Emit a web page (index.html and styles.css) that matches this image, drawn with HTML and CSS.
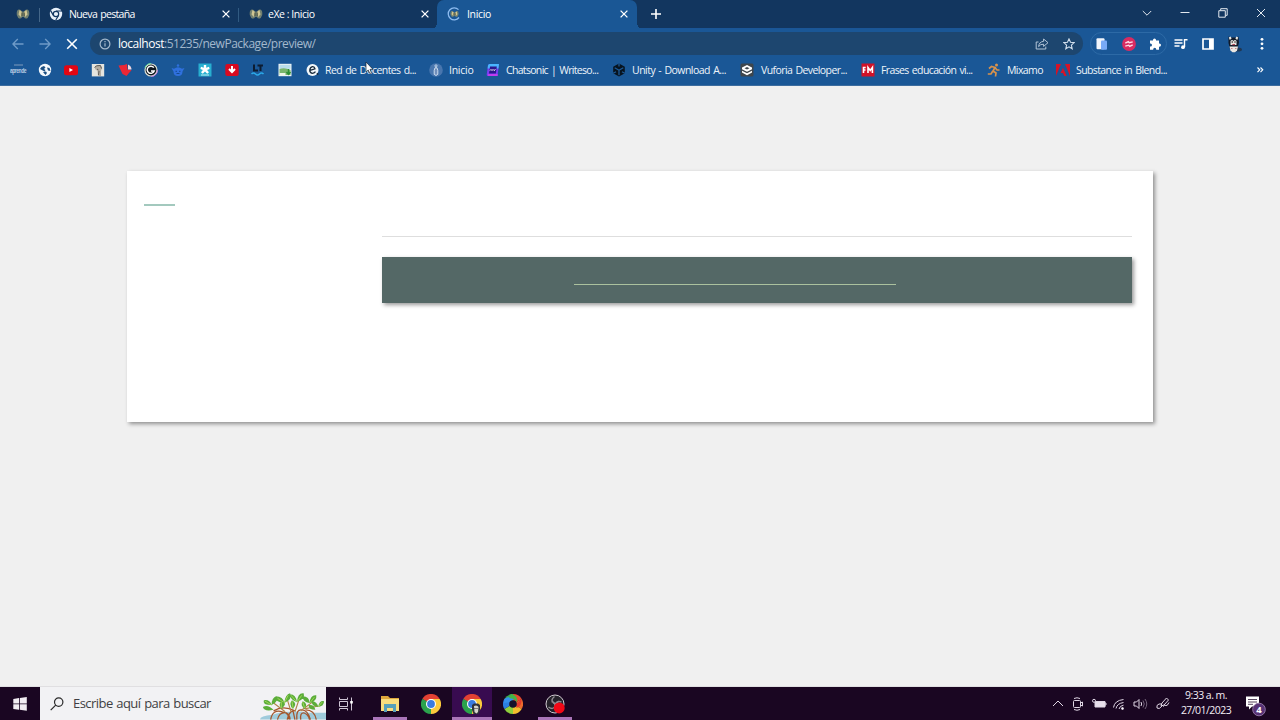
FILE: index.html
```html
<!DOCTYPE html>
<html lang="es">
<head>
<meta charset="utf-8">
<title>Inicio</title>
<link rel="stylesheet" href="styles.css">
</head>
<body>
<svg class="defs" width="0" height="0">
  <symbol id="close" viewBox="0 0 10 10"><path d="M1.6 1.6l6.8 6.8M8.4 1.6L1.6 8.4" fill="none" stroke="currentColor" stroke-width="1.3"/></symbol>
  <symbol id="exe" viewBox="0 0 14 12"><path d="M.8 7Q.2 2 2.800 1.500q2-.3 3.200 2h2q1.200-2.300 3.200-2 2.600.5 2 5.500l-1.500 3q-2.500 1.500-3.700-.8-1-.9-2 0Q4.800 11.500 2.300 10z" fill="#728070"/><path d="M3.500 2l2.500 2-1 5-2.500-2.500zM10.500 2L8 4l1 5 2.500-2.500z" fill="#d0c693"/><path d="M6 4.500v3.500M8.200 4.500v3.500" stroke="#4d513d"/></symbol>
  <symbol id="chrome" viewBox="0 0 20 20"><path d="M10 10L1.3 5A10 10 0 0 1 18.7 5z" fill="#e34133"/><path d="M10 10l8.7-5A10 10 0 0 1 10 20z" fill="#fbca3c"/><path d="M10 10v10A10 10 0 0 1 1.3 5z" fill="#2ba24c"/><path d="M10 5h8.7L14.3 12.5 10 20l4.3-7.5z" fill="#fbca3c"/><path d="M1.3 5l4.4 7.5L10 10z" fill="#2ba24c"/><circle cx="10" cy="10" r="5" fill="#fff"/><circle cx="10" cy="10" r="3.9" fill="#3a7be0"/></symbol>
</svg>
<div class="screen">
  <header class="tabs">
    <div class="tab pinned"><svg width="14" height="12"><use href="#exe"/></svg></div>
    <div class="tab newtab">
      <svg width="14" height="14" viewBox="0 0 14 14"><circle cx="7" cy="7" r="6.2" fill="#e8f1fa"/><circle cx="7" cy="7" r="2.7" fill="#e8f1fa" stroke="#123761" stroke-width="1.2"/><path d="M7 4h6M4.4 8.4L1.6 3.6M9.5 8.5L6.8 13" stroke="#123761" stroke-width="1.2"/></svg>
      <span class="t-nueva">Nueva pestaña</span><svg class="x" width="10" height="10"><use href="#close"/></svg>
    </div>
    <div class="tab exe">
      <svg width="14" height="12"><use href="#exe"/></svg>
      <span class="t-exe">eXe : Inicio</span><svg class="x" width="10" height="10"><use href="#close"/></svg>
    </div>
    <div class="tab active">
      <svg width="14" height="14" viewBox="0 0 14 14"><path d="M11.500 2.600A6 6 0 1 0 12 10.500" fill="none" stroke="#8ebcf0" stroke-width="1.3"/><svg x="3" y="3" width="9" height="8"><use href="#exe"/></svg></svg>
      <span class="t-ini">Inicio</span><svg class="x" width="10" height="10"><use href="#close"/></svg>
    </div>
    <svg class="plus" width="12" height="12" viewBox="0 0 12 12"><path d="M6 1v10M1 6h10" stroke="#fff" stroke-width="1.6"/></svg>
    <div class="winbtns">
      <svg width="10" height="10" viewBox="0 0 10 10"><path d="M.8 3L5 7.2 9.2 3"/></svg>
      <svg width="10" height="10" viewBox="0 0 10 10"><path d="M.5 4.500h9"/></svg>
      <svg width="10" height="10" viewBox="0 0 10 10"><path d="M.8 2.7h6.5v6.5H.8zM2.7 2.5V.7h6.5v6.6H7.5"/></svg>
      <svg width="10" height="10" viewBox="0 0 10 10"><path d="M1 1l8 8M9 1L1 9"/></svg>
    </div>
  </header>
  <div class="toolbar">
    <svg class="dim" width="12" height="12" viewBox="0 0 12 12"><path d="M11.5 6H1M5.8 1L.9 6l4.9 5"/></svg>
    <svg class="dim" width="12" height="12" viewBox="0 0 12 12"><path d="M.5 6H11M6.2 1L11.1 6l-4.9 5"/></svg>
    <svg class="stop" width="12" height="12" viewBox="0 0 12 12"><path d="M1.2 1.2l9.6 9.6M10.8 1.2l-9.6 9.6"/></svg>
    <div class="address">
      <svg width="12" height="12" viewBox="0 0 12 12" fill="none" stroke="#a5b9cd"><circle cx="6" cy="6" r="4.9" stroke-width="1.2"/><path d="M6 5.2v3.4M6 3v1.2" stroke-width="1.2"/></svg>
      <span class="url"><b>localhost</b>:51235/newPackage/preview/</span>
      <svg class="share" width="14" height="12" viewBox="0 0 14 12" fill="none" stroke="#b3c5d8"><path d="M3.5 4H1.2v7h9.6V8.6"/><path d="M8.6 1l4.4 3.7-4.4 3.7V6.2Q5.3 6 3.6 8.6 4 3.8 8.6 3.3z"/></svg>
      <svg class="star" width="12" height="12" viewBox="0 0 12 12" fill="none" stroke="#d3e0ed" stroke-width="1.1"><path d="M6 .9l1.5 3.400 3.700.3-2.800 2.500.8 3.700L6 8.900l-3.200 1.900.8-3.700L.8 4.600l3.700-.3z"/></svg>
    </div>
    <div class="ext">
      <svg width="12" height="12" viewBox="0 0 12 12"><rect x=".5" y=".3" width="8" height="11" rx="1" fill="#f1f5fc"/><rect x="5" y="2.5" width="6" height="9.3" rx="1" fill="#78aaf7"/></svg>
      <svg width="14" height="14" viewBox="0 0 14 14"><circle cx="7" cy="7" r="6.9" fill="#d92b61"/><path d="M3.300 6.200l3-1.500 1 1.100 3.400-.9M3.300 9.200l3.400-1 1 1.100 3-1.500" stroke="#ffdce7" stroke-width="1.400" fill="none"/></svg>
      <svg width="12" height="12" viewBox="0 0 12 12"><path d="M1 2.5h3V2a1.5 1.5 0 0 1 3 0v.5h3v3h.4a1.6 1.6 0 0 1 0 3.2H10v3H7.2v-.5a1.5 1.5 0 0 0-3 0v.5H1V8.5h.5a1.5 1.5 0 0 0 0-3H1z" fill="#fff"/></svg>
    </div>
    <svg class="music" width="14" height="12" viewBox="0 0 14 12"><path d="M.5 2h8M.5 5h8M.5 8h5" stroke="#fff" stroke-width="1.5"/><path d="M10.5 9V1.7h3" stroke="#fff" stroke-width="1.4" fill="none"/><circle cx="9" cy="9.2" r="1.9" fill="#fff"/></svg>
    <svg class="panel" width="12" height="12" viewBox="0 0 12 12"><path d="M1 1h10v10H1z" fill="none" stroke="#fff" stroke-width="1.7"/><path d="M7 1h4v10H7z" fill="#fff"/></svg>
    <svg class="avatar" width="16" height="18" viewBox="0 0 16 18"><ellipse cx="11.500" cy="14.500" rx="4.500" ry="2" fill="#203854"/><path d="M2.500 1.500L5 2.500h5.500l2-1 .5 6-1.500 6H4L2.500 8z" fill="#111b2a"/><path d="M2.800 2.500l1.800-1 1 2-1.800 1.500zM12.200 2.500l-1.800-1-1 2 1.800 1.500z" fill="#eceae6"/><path d="M4.500 6q1.500-2 3 0 1.500-2 3 0v4h-6z" fill="#e8e4df"/><circle cx="6.200" cy="7" r=".7"/><circle cx="9" cy="7" r=".7"/><path d="M3.500 11.500h8.500l-1 4-2 1.800H6.500l-2-1.800z" fill="#ebe7e2"/><path d="M6.300 9h2.700v1.200H6.300z" fill="#b44a58"/><path d="M5 13.500h1.500m2.500 0h1.500" stroke="#c78486"/></svg>
    <svg class="kebab" width="4" height="14" viewBox="0 0 4 14" fill="#fff"><circle cx="2" cy="2.3" r="1.4"/><circle cx="2" cy="6.8" r="1.4"/><circle cx="2" cy="11.3" r="1.4"/></svg>
  </div>
  <nav class="bookmarks">
    <div class="quick">
      <div class="aprende"><i></i><span>aprende</span></div>
      <svg viewBox="0 0 16 16"><circle cx="8" cy="8" r="6.200" fill="#f4f8fc"/><path d="M3 7q1-2.500 4-3l1.500 1.500L7 7l1.500 1L7.500 9.500zM10 5.500l2.500.5 1 3-2.500-.5zM6 10l3-.5 1 1.500-1.500 2z" fill="#1c4f82"/></svg>
      <svg viewBox="0 0 16 16"><rect x="1" y="3.2" width="14" height="10" rx="2.5" fill="#e30613"/><path d="M6.4 6v4l3.6-2z" fill="#fff"/></svg>
      <svg viewBox="0 0 16 16"><path d="M1.8 2h12.4v12.4H1.8z" fill="#e5e5df"/><path d="M5 4l5-1 2 3-1 3v5H8l-.5-5L5 7z" fill="#b5aea2"/><path d="M4.500 5.500Q6 3 10.500 3.500l1 3M7 7l1.500 1M9 9l-.5 4" stroke="#5b5955" fill="none"/></svg>
      <svg viewBox="0 0 16 16"><path d="M1.500 3.500L7 3l3-1 .5 5.500 4 .8L12 11l-2.500 3-4-2z" fill="#ec2735"/><path d="M11 2.500q3.500 1.500 3.500 5H11z" fill="#f2d4dc"/></svg>
      <svg viewBox="0 0 16 16"><circle cx="8" cy="8" r="6" fill="#10171f" stroke="#d9ddd3" stroke-width="1.2"/><path d="M10.8 5.7A3.600 3.600 0 1 0 11.2 9H8" fill="none" stroke="#fff" stroke-width="1.5"/><path d="M2 6a6.300 6.300 0 0 1 6-4.500" stroke="#71e29c" fill="none"/><path d="M8 14.500A6.500 6.500 0 0 0 14.500 8" stroke="#c07adb" fill="none"/></svg>
      <svg viewBox="0 0 16 16"><path d="M1.5 6l2.500.8Q8 3.500 12 6.800l2.500-.8-2 3.500q0 4.500-4.500 4.500T3.500 9.500z" fill="#2f70dd"/><circle cx="8" cy="3.500" r="1.200" fill="#2f70dd"/><path d="M5.500 9.300h1.500M9 9.300h1.500M6.500 11.500h3" stroke="#144b91"/></svg>
      <svg viewBox="0 0 16 16"><path d="M1.5 1.5h13v13h-13z" fill="#28afd0"/><path d="M6.8 3h2.400v2.700L12 4.800l.6 2.100-2.500 1 1.900 2.300-1.800 1.500L8 9.500l-2.200 2.200L4 10.200l1.900-2.300-2.500-1L4 4.800l2.800.9z" fill="#fff"/><path d="M4 13h8" stroke="#bdeaf2"/></svg>
      <svg viewBox="0 0 16 16"><rect x="1.3" y="2" width="13.4" height="12" rx="2" fill="#d90920"/><path d="M8 4v5M5 7l3 3 3-3" stroke="#fff" stroke-width="2" fill="none"/></svg>
      <svg viewBox="0 0 16 16"><path d="M4 2.500v6h4M7.500 3.500H13M10.500 3.500V9" fill="none" stroke="#0c1c31" stroke-width="2"/><path d="M1.5 12q2-2 4 0t4 0 4 0" fill="none" stroke="#2ba8e7" stroke-width="1.5"/></svg>
      <svg viewBox="0 0 16 16"><path d="M1.5 1.8h13v12.400h-13z" fill="#edf4f6"/><path d="M2.5 2.8h11v4h-11z" fill="#b9ddeb"/><path d="M2.5 7q5-2 11 1v5h-11z" fill="#79b56b"/><path d="M2.5 11h6v2.500h-6z" fill="#eef4e7"/><path d="M11.500 7v5M9.500 10l2 2.500 2-2.500" stroke="#2e8e35" stroke-width="1.4" fill="none"/></svg>
    </div>
    <div class="bm b1"><svg viewBox="0 0 16 16"><circle cx="7.500" cy="8" r="6" fill="#f2f7fa"/><path d="M5 8.300l5-1.500Q9.500 4.500 7.500 4.700 5 5.300 4.800 8t2.400 3.300q2 0 3.300-1.600" fill="none" stroke="#1a2b3c" stroke-width="1.3"/><circle cx="12.500" cy="12" r="1" fill="#1a2b3c"/></svg><span>Red de Docentes d...</span></div>
    <div class="bm b2"><svg viewBox="0 0 16 16"><circle cx="8" cy="8" r="6.8" fill="#4976ae"/><circle cx="8" cy="3.900" r="1.100" fill="none" stroke="#d9e7f5" stroke-width=".8"/><path d="M7 5.800h2l.8 2.500v4L8 13.500l-1.800-1.200v-4z" fill="#708eba" stroke="#d9e7f5" stroke-width=".9"/></svg><span>Inicio</span></div>
    <div class="bm b3"><svg viewBox="0 0 16 16"><path d="M4.500 2H14l-1.500 12H3q-1.500 0-1.300-1.500L3 3.500Q3.200 2 4.500 2z" fill="#7a3df4"/><path d="M4.500 2H14l-.6 4.500H2.600L3 3.500Q3.200 2 4.500 2z" fill="#49b5ff"/><path d="M5 4.500h6.800l-.9 7H4z" fill="#2b168c"/><path d="M5 8.500l1-1 1 1 1-1 1 1 1.500-1" stroke="#fff" fill="none"/><path d="M3 13h9.700" stroke="#d93cef" stroke-width="1.5"/></svg><span>Chatsonic | Writeso...</span></div>
    <div class="bm b4"><svg viewBox="0 0 16 16"><path d="M8 1.500l5.800 3.200v6.600L8 14.500l-5.800-3.200V4.700z" fill="#07131f"/><path d="M8 8.300v5M8 8.300l4.300-2.500M8 8.300L3.700 5.800M8 1.500v3M2.200 11.300L5 9.700M13.800 11.300L11 9.700" stroke="#1c5a98" stroke-width="1.300" fill="none"/></svg><span>Unity - Download A...</span></div>
    <div class="bm b5"><svg viewBox="0 0 16 16"><rect x="1.500" y="1.500" width="13" height="13" rx="1.500" fill="#3f464c"/><path d="M8 3l5 2.500v1.700L8 9.800 3 7.200V5.500zM3 8.700l5 2.600 5-2.600v1.800L8 13.200l-5-2.700z" fill="#fff"/><path d="M5.500 6.200L8 5l2.500 1.200L8 7.500z" fill="#3f464c"/></svg><span>Vuforia Developer...</span></div>
    <div class="bm b6"><svg viewBox="0 0 16 16"><path d="M1.5 1.500h13v13h-13z" fill="#d21228"/><path d="M3.500 11V5.500h2.200M3.500 8h2M8 11V5.500l2.200 3 2.200-3V11" fill="none" stroke="#fff" stroke-width="1.600"/></svg><span>Frases educación vi...</span></div>
    <div class="bm b7"><svg viewBox="0 0 16 16"><circle cx="10.500" cy="3" r="1.500" fill="#d8924c"/><path d="M3 6.500L5.500 4.500 9 5.500 7 9l3 2-.5 3.500M6.800 9L5 12H1.800M9 5.500l2 2.500h2.500" stroke="#d8924c" stroke-width="1.700" fill="none"/></svg><span>Mixamo</span></div>
    <div class="bm b8"><svg viewBox="0 0 16 16"><path d="M1 2h5L1 14zM10 2h5v12zM8 5.800l3.700 8.200H9.200L8 11H5.500z" fill="#d51327"/></svg><span>Substance in Blend...</span></div>
    <svg class="more" width="8" height="8" viewBox="0 0 8 8"><path d="M1.500 1.500l2.200 2.300-2.200 2.300M4.500 1.500l2.200 2.300-2.200 2.300" stroke="#fff" stroke-width="1.2" fill="none"/></svg>
  </nav>
  <main class="page">
    <div class="card">
      <div class="side"></div>
      <section class="content"><div class="band"><div class="link"></div></div></section>
    </div>
  </main>
  <footer class="taskbar">
    <div class="start"><svg width="14" height="14" viewBox="0 0 14 14"><path d="M.3 2l5.700-.9v5.400H.3zM6.800 1L13.800 0v6.500h-7zM.3 7.300H6v5.400l-5.700-.8zM6.800 7.300h7v6.500l-7-1z" fill="#f1edf2"/></svg></div>
    <div class="search">
      <svg width="14" height="14" viewBox="0 0 14 14" fill="none" stroke="#292929" stroke-width="1.2"><circle cx="8.7" cy="5.1" r="4.2"/><path d="M5.7 8.1L.7 13.2"/></svg>
      <span>Escribe aquí para buscar</span>
      <svg class="tree" width="66" height="29" viewBox="0 0 68 29">
        <path d="M0 29q0-4 13-5 8-3 18-3 13-1 19 1h18v7z" fill="#9fcbdb"/>
        <path d="M11 29q2-11 12-8 7 1 7 8M18 29q2-8 9-7 4 2 4 7M28 29q2-8 6-9l2 9M38 29q-1-11 5-10 6 0 9 10M42 29q-1-7 3-7 5 2 6 7M14 20q10-6 22 0M58 29q-2-10-11-10" fill="none" stroke="#a4562d" stroke-width="1.300"/>
        <path d="M26 21L14 12M32 21L28 8M36 21L40 9M42 20L54 11M46 18l14-3" stroke="#b0854a" stroke-width="1.200"/>
        <g fill="#5bad3a"><path d="M12 14Q2 14 4 9q6-1 8 5 0-8 5-9 4 4-5 9zM25 12q-10-1-9-7 8 0 9 7 1-9 6-10 3 6-6 10zM38 11q-7-2-7-8 6 0 7 8 1-10 7-9 2 6-7 9zM51 12q-7-1-7-7 7 0 7 7 1-9 7-8 1 6-7 8zM60 16q-7-1-7-6 6 0 7 6 1-7 6-6 0 5-6 6zM14 19q-10 2-11-3 5-3 11 3zM22 18q-4-6 1-8 6 2-1 8zM34 18q-5-5-1-9 6 3 1 9zM46 18q-5-4-2-8 6 2 2 8zM57 19q-7 0-7-5 6-1 7 5z"/></g>
        <path d="M5 10l7 4M25 12l4-8M38 11l5-7M52 11l4-5M60 16l4-5M44 11l2 6M22 11v6M33 10l1 7M18 7l6 4M32 4l5 6" stroke="#a0d655" fill="none"/>
      </svg>
    </div>
    <div class="task view"><svg width="16" height="14" viewBox="0 0 16 14" fill="none" stroke="#cfc5d5"><path d="M1.500.5v2h8v-2M1.500 4.500h8v5h-8zM1.500 13.500v-2h8v2M13.500.5v13"/><path d="M12.200 4h2.600v2.500h-2.600z" fill="#fff" stroke="none"/></svg></div>
    <div class="task files on"><svg width="20" height="18" viewBox="0 0 20 18"><path d="M1 1h7l2 2h9v13H1z" fill="#dfa83c"/><path d="M1 4h18v12H1z" fill="#f8dc7d"/><path d="M4 9h12v8h-3v-4H7v4H4z" fill="#559fba"/></svg></div>
    <div class="task chr"><svg width="20" height="20"><use href="#chrome"/></svg></div>
    <div class="task current on"><svg width="20" height="20" viewBox="0 0 20 20"><use href="#chrome" width="20" height="20"/><path d="M10 11l2-1.500h4l2 1.500v5l-1.500 4h-5L10 16z" fill="#31333c"/><path d="M12 12q3-1.500 4.500 1l-.5 5-1.500 1.500-2-1.500z" fill="#d8d4cc"/><path d="M12.500 14.500h1m1 0h1" stroke="#222"/></svg></div>
    <div class="task swirl"><svg width="20" height="20" viewBox="0 0 20 20"><path d="M10 10L1.300 5A10 10 0 0 1 10 0z" fill="#35a852"/><path d="M10 10V0a10 10 0 0 1 8.700 5z" fill="#e8482f"/><path d="M10 10l8.700-5a10 10 0 0 1 0 10z" fill="#ee6a2c"/><path d="M10 10l8.700 5A10 10 0 0 1 10 20z" fill="#f4bd2e"/><path d="M10 10v10a10 10 0 0 1-8.700-5z" fill="#8fcf3c"/><path d="M10 10l-8.700 5a10 10 0 0 1 0-10z" fill="#2b7fe0"/><path d="M1.300 5Q7 1 11 5l-3 3-7 1z" fill="#3590ec"/><path d="M8 0q7 1 6 8l-3-3-5-1z" fill="#47b344"/><path d="M18.500 5q.5 7-5 9l-.5-4z" fill="#e43a2e"/><circle cx="10" cy="10" r="3.800" fill="#16102a"/></svg></div>
    <div class="task obs on"><svg width="20" height="20" viewBox="0 0 20 20"><circle cx="10" cy="10" r="9" fill="#25222a" stroke="#d2ccd2"/><path d="M9.500 2.500q-4.500 3.500-1 6.500 3.500 1.500 5.500-2M3.500 13q4.500 3 6.500-.5.500-4-3.500-5M16.500 8q-4.500-1.500-6 2-.5 4 3.500 6" fill="none" stroke="#8f8a92" stroke-width="1.500"/><circle cx="14.200" cy="13.900" r="5.500" fill="#f10917"/></svg></div>
    <div class="tray">
      <svg viewBox="0 0 16 16"><path d="M3 10l5-5 5 5"/></svg>
      <svg viewBox="0 0 16 16"><rect x="3.500" y="4.500" width="7" height="7" rx="1"/><path d="M10.500 7l2-1v4l-2-1M4 2.500q3-1.500 6 0M4 13.500q3 1.500 6 0"/></svg>
      <svg viewBox="0 0 16 16"><path d="M4 5.500h10v5.500H4z" fill="#e8dfec"/><path d="M14 7h1v2h-1"/><circle cx="3" cy="4.800" r="1.500" fill="#1a0622"/></svg>
      <svg viewBox="0 0 16 16"><path d="M2.500 11.500Q3.500 4.500 12.500 3.500M5 12.500Q6 7.500 12.500 6.500M8 13q.8-3.300 4.500-3.800"/><circle cx="11.500" cy="12.500" r="1" fill="#fff"/></svg>
      <svg viewBox="0 0 16 16"><path d="M2 6h2.500L7 3.500v9L4.500 10H2zM9 6q1.300 2 0 4"/><path d="M11 4.500q2.500 3.500 0 7M13 3q3.500 5 0 10" stroke="#74647b"/></svg>
      <svg class="pen" viewBox="0 0 16 16"><path d="M6 10l1-3 4.500-5 2 2-4.500 5zM7 8H4q-3 1-2 4 2 2 5-2M8 10.500q2-2 3-1t3-3"/></svg>
    </div>
    <div class="clock"><span class="time">9:33 a. m.</span><span class="date">27/01/2023</span></div>
    <svg class="notes" width="22" height="22" viewBox="0 0 22 22"><path d="M1 1.500h13v10H7l-3 3v-3H1z" fill="#fff"/><path d="M3 4.500h9M3 7h9M3 9.300h5" stroke="#57455f"/><circle cx="14" cy="14.500" r="6.300" fill="#573276" stroke="#8e73a3"/><text x="14" y="18" text-anchor="middle" font-size="9.500" font-weight="bold" fill="#fff">4</text></svg>
  </footer>
  <svg class="cursor" width="9" height="14" viewBox="0 0 9 14"><path d="M1 1v10l2.200-2 1.600 3.500 1.700-.8L5 8.400h3z" fill="#fff" stroke="#172535" stroke-width=".7"/></svg>
</div>
</body>
</html>
```

FILE: styles.css
```css
* { box-sizing: border-box; }
body { margin: 0; font-family: "Open Sans", "Noto Sans", sans-serif; overflow: hidden; }
svg { display: block; flex: none; }
.defs { position: absolute; }
.screen { width: 1280px; height: 720px; display: flex; flex-direction: column; position: relative; }
.screen > * { flex: none; }

.tabs { height: 29px; background: #12365f; border-bottom: 1px solid #1a5596; display: flex; color: #fff; }
.tab { height: 28px; display: flex; align-items: center; font-size: 10.5px; white-space: nowrap; }
.tab span { margin-left: 5px; }
.tab .t-nueva { letter-spacing: -.65px; word-spacing: 1px; }
.tab .t-exe { letter-spacing: -.45px; }
.tab .t-ini { margin-left: 6px; letter-spacing: -.35px; }
.tab .x { margin-left: auto; }
.pinned { width: 39px; padding-left: 16px; }
.newtab { width: 200px; padding: 0 8px 0 10px; background: linear-gradient(#456789, #456789) 0 8px / 1px 14px no-repeat, linear-gradient(#315b82, #315b82) right 8px / 1px 14px no-repeat; }
.newtab svg:first-child { margin-left: 0; }
.newtab .t-nueva { margin-left: 6px; }
.exe { width: 198px; padding: 0 7px 0 10px; }
.active { width: 200px; padding: 0 8px 0 10px; background: #1a5795; border-radius: 7px 7px 0 0; position: relative; height: 29px; padding-bottom: 1px; }
.active::before, .active::after { content: ""; position: absolute; bottom: 0; width: 6px; height: 6px; }
.active::before { left: -6px; background: radial-gradient(circle at 0 0, transparent 6px, #1a5795 6px); }
.active::after { right: -6px; background: radial-gradient(circle at 100% 0, transparent 6px, #1a5795 6px); }
.plus { margin: 8px 0 0 13px; }
.winbtns { margin-left: auto; padding-right: 14px; height: 25px; display: flex; gap: 28px; align-items: center; }
.winbtns svg { fill: none; stroke: #e3e9ef; stroke-width: 1; }

.toolbar { height: 29px; background: #1a5796; display: flex; align-items: center; padding: 0 16.5px 0 12px; }
.dim { fill: none; stroke: #6f9bc8; stroke-width: 1.3; margin-right: 15px; }
.stop { fill: none; stroke: #fff; stroke-width: 1.6; }
.address { width: 993px; height: 23px; margin-left: 12px; border-radius: 12px; background: #1d466f; display: flex; align-items: center; padding: 0 8px 0 9px; }
.url { margin-left: 7px; font-size: 12px; line-height: 20px; letter-spacing: -.48px; color: #a3b8cd; }
.url b { color: #fff; font-weight: 400; }
.share { margin-left: auto; }
.star { margin-left: 14px; }
.ext { width: 77px; height: 23px; margin-left: 7px; border: 1px solid #2d6aa6; border-radius: 12px; display: flex; align-items: center; justify-content: space-between; padding: 0 5px; }
.music { margin-left: 7px; }
.panel { margin-left: 14px; }
.avatar { margin-left: 12px; }
.kebab { margin-left: auto; }

.bookmarks { height: 28px; background: #1a5796; border-bottom: 1px solid #3d6d9f; display: grid; grid-template-columns: 295px 123px 57px 126px 128px 121px 126px 69px 1fr 10px; align-items: center; padding: 0 14px 3px 10px; color: #eef4fa; }
.quick { display: flex; gap: 10.7px; align-items: center; }
.quick svg, .bm svg { width: 16px; height: 16px; }
.aprende { width: 16px; height: 16px; flex: none; display: flex; flex-direction: column; align-items: center; color: #b9cce3; font: bold 5px/8px "Liberation Sans", sans-serif; letter-spacing: -.5px; padding-top: 2px; }
.aprende span { transform: scaleY(1.5); }
.aprende i { width: 9px; height: 2px; background: #4c79a9; }
.bm { display: flex; align-items: center; font-size: 10.5px; line-height: 15px; gap: 5px; white-space: nowrap; word-spacing: 1px; }
.b1 { letter-spacing: -.6px; gap: 4px; }
.b2 { letter-spacing: -.25px; }
.b3 { letter-spacing: -.68px; }
.b4 { letter-spacing: -.52px; }
.b5 { letter-spacing: -.58px; gap: 6px; }
.b6 { letter-spacing: -.62px; }
.b7 { letter-spacing: -.6px; }
.b8 { letter-spacing: -.6px; }

.page { height: 601px; background: #f0f0f0; padding: 85px 127px; border-bottom: 1px solid #e0dfe1; }
.card { width: 1026px; height: 251px; background: #fff; box-shadow: 2px 2px 4px rgba(0,0,0,.4); padding: 33px 21px 0 17px; display: flex; justify-content: space-between; }
.side { width: 31px; height: 2px; background: #a3c9be; }
.content { width: 750px; border-top: 1px solid #dedede; margin-top: 32px; padding-top: 20.4px; }
.band { height: 46px; background: #546866; box-shadow: 2px 2px 4px rgba(0,0,0,.4); padding: 26.6px 0 0 192px; }
.link { width: 322px; height: 1px; background: #abc19e; }

.taskbar { height: 33px; background: #1a0622; display: flex; }
.start { width: 40px; display: grid; place-items: center; }
.search { width: 286px; background: #f2f2f4; display: flex; align-items: center; padding-left: 10px; color: #3f3f43; font-size: 13px; }
.search span { margin: -2px 0 0 9px; white-space: nowrap; letter-spacing: -.55px; word-spacing: .8px; }
.tree { margin-left: auto; align-self: flex-end; }
.task { display: grid; place-items: center; height: 33px; width: 34px; }
.on { border-bottom: 3px solid #aa75b9; padding-top: 3px; }
.view { width: 40px; }
.files { margin-left: 7px; }
.chr { margin-left: 7px; }
.current { margin-left: 4px; width: 40px; background: #380b50; }
.swirl { margin-left: 4px; }
.obs { margin-left: 8px; }
.tray { margin-left: auto; display: flex; align-items: center; gap: 4.5px; }
.tray svg { width: 16px; height: 16px; fill: none; stroke: #e0d7e5; stroke-width: 1; }
.tray .pen { margin-left: 3px; }
.clock { width: 66px; display: flex; flex-direction: column; align-items: center; color: #f3edf5; font-size: 10.5px; line-height: 15px; letter-spacing: -.55px; padding-top: 1px; margin-left: 2px; white-space: nowrap; }
.notes { margin: 8px 13px 0 6px; }
.cursor { position: absolute; left: 365px; top: 61px; }
```
